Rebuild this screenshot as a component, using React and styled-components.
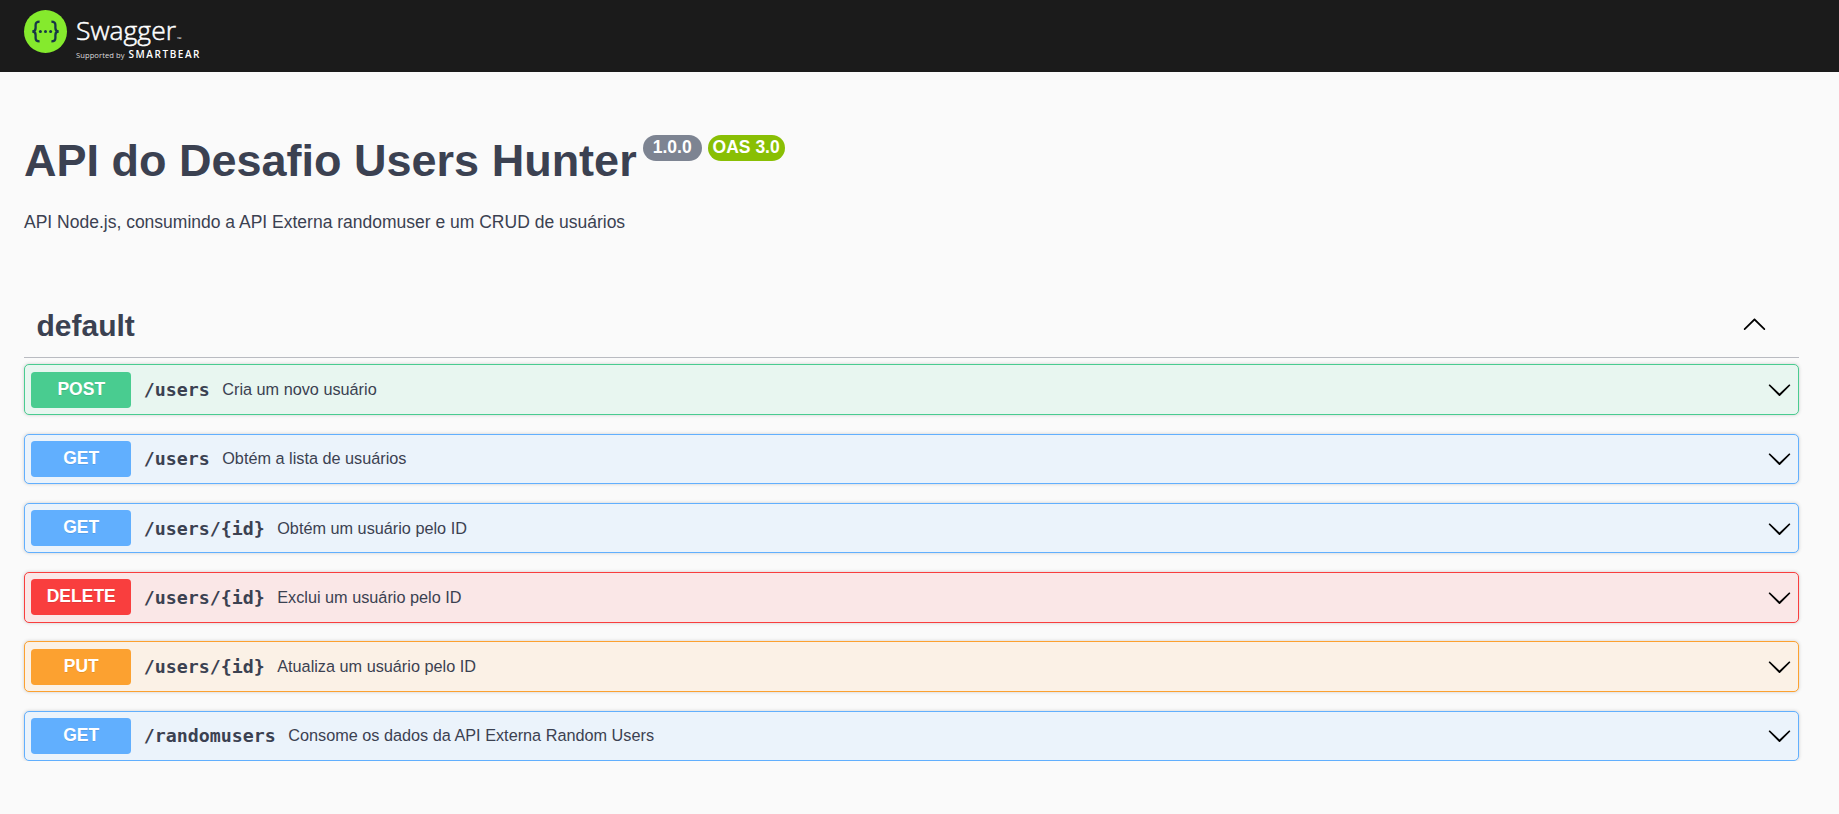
import React from 'react';
import styled, { createGlobalStyle } from 'styled-components';

const GlobalStyle = createGlobalStyle`
  *, *::before, *::after { box-sizing: border-box; }
  body {
    margin: 0;
    background: #fafafa;
    color: #3b4151;
    font-family: "Liberation Sans", Arial, sans-serif;
  }
`;

const Topbar = styled.header`
  height: 72px;
  padding: 9px 23px;
  background: #1b1b1b;
`;

const Logo = styled.svg`
  display: block;
  width: 180px;
  height: 54px;
`;

const Page = styled.main`
  width: 1775px;
  margin: 0 0 0 24px;
`;

const Info = styled.section`
  padding-top: 63px;
  height: 225px;
`;

const Title = styled.h1`
  display: flex;
  align-items: flex-start;
  margin: 0;
  font-size: 45px;
  line-height: 52px;
  font-weight: 700;
`;

const Badge = styled.span`
  margin: 0 0 0 6px;
  width: ${(p) => p.$width}px;
  height: 26px;
  border-radius: 26px;
  background: ${(p) => p.$color};
  color: #fff;
  font-size: 17.5px;
  line-height: 24px;
  text-align: center;
  white-space: nowrap;
`;

const Description = styled.p`
  margin: 23px 0 0;
  font-size: 17.5px;
  line-height: 24px;
`;

const SectionHeader = styled.div`
  display: flex;
  align-items: center;
  justify-content: space-between;
  height: 61px;
  margin-bottom: 6.35px;
  padding: 0 32px 7px 12.5px;
  border-bottom: 1px solid rgba(59, 65, 81, 0.34);
`;

const SectionName = styled.h3`
  margin: 0;
  padding-top: 4px;
  font-size: 30px;
  line-height: 36px;
`;

const OperationList = styled.div`
  display: flex;
  flex-direction: column;
  gap: 18.75px;
`;

const Operation = styled.div`
  display: flex;
  align-items: center;
  height: 50.52px;
  padding: 6.25px;
  border: 1px solid ${(p) => p.$color};
  border-radius: 5px;
  background: ${(p) => p.$tint};
  box-shadow: 0 0 3.75px rgba(0, 0, 0, 0.19);
`;

const Method = styled.span`
  width: 100px;
  height: 36px;
  border-radius: 3.75px;
  background: ${(p) => p.$color};
  color: #fff;
  font-size: 17.5px;
  font-weight: 700;
  line-height: 34px;
  text-align: center;
  text-shadow: 0 1px 0 rgba(0, 0, 0, 0.1);
`;

const Path = styled.span`
  padding: 1px 12.5px 0;
  font-family: "DejaVu Sans Mono", monospace;
  font-size: 18.27px;
  font-weight: 700;
  line-height: 24px;
`;

const Summary = styled.span`
  flex: 1;
  font-size: 16.25px;
`;

const Arrow = styled.svg`
  width: 25px;
  height: 25px;
  flex: none;
`;

const ArrowDown = () => (
  <Arrow viewBox="0 0 20 20">
    <path d="M17.418 6.109c.272-.268.709-.268.979 0s.271.701 0 .969l-7.908 7.83c-.27.268-.707.268-.979 0l-7.908-7.83c-.27-.268-.27-.701 0-.969.271-.268.709-.268.979 0L10 13.25l7.418-7.141z" />
  </Arrow>
);

const ArrowUp = () => (
  <Arrow viewBox="0 0 20 20">
    <path d="M17.418 14.908c.272.268.709.268.979 0s.271-.701 0-.969l-7.908-7.83c-.27-.268-.707-.268-.979 0l-7.908 7.83c-.27.268-.27.701 0 .969.271.268.709.268.979 0L10 7.767l7.418 7.141z" />
  </Arrow>
);

const SwaggerLogo = () => (
  <Logo viewBox="23 9 180 54">
    <circle cx="45.5" cy="31.5" r="21.5" fill="#85ea2d" />
    <g fill="none" stroke="#173647" strokeWidth="2.3">
      <path d="M39.6 21.6c-3 0-4 .9-4 3.4v3c0 2.3-1 3.5-3.3 3.5 2.3 0 3.3 1.2 3.3 3.5v3c0 2.5 1 3.4 4 3.4" />
      <path d="M51.4 21.6c3 0 4 .9 4 3.4v3c0 2.3 1 3.5 3.3 3.5-2.3 0-3.3 1.2-3.3 3.5v3c0 2.5-1 3.4-4 3.4" />
    </g>
    <g fill="#173647">
      <circle cx="40.4" cy="31.5" r="1.5" />
      <circle cx="45.5" cy="31.5" r="1.5" />
      <circle cx="50.6" cy="31.5" r="1.5" />
    </g>
    <g fill="#fff">
      <text x="76" y="40.3" fontFamily="Open Sans, Noto Sans, sans-serif" fontSize="26.5" fontWeight="300" stroke="#fff" strokeWidth="0.5" textLength="100" lengthAdjust="spacingAndGlyphs">Swagger</text>
      <text x="177" y="41" fontFamily="Open Sans, sans-serif" fontSize="5" textLength="4.5" lengthAdjust="spacingAndGlyphs">™</text>
      <text x="76" y="57.6" fontFamily="Open Sans, Noto Sans, sans-serif" fontSize="7.6" fill="#ddd" textLength="48.5">Supported by</text>
      <text x="128.5" y="58" fontFamily="Open Sans, sans-serif" fontSize="10" fontWeight="600" textLength="71">SMARTBEAR</text>
    </g>
  </Logo>
);

const COLORS = {
  POST: ['#49cc90', '#e8f6f0'],
  GET: ['#61affe', '#ebf3fb'],
  DELETE: ['#f93e3e', '#fae7e7'],
  PUT: ['#fca130', '#fbf1e6'],
};

const OPERATIONS = [
  ['POST', '/users', 'Cria um novo usuário'],
  ['GET', '/users', 'Obtém a lista de usuários'],
  ['GET', '/users/{id}', 'Obtém um usuário pelo ID'],
  ['DELETE', '/users/{id}', 'Exclui um usuário pelo ID'],
  ['PUT', '/users/{id}', 'Atualiza um usuário pelo ID'],
  ['GET', '/randomusers', 'Consome os dados da API Externa Random Users'],
];

export default function App() {
  return (
    <>
      <GlobalStyle />
      <Topbar>
        <SwaggerLogo />
      </Topbar>
      <Page>
        <Info>
          <Title>
            API do Desafio Users Hunter
            <Badge $width={59} $color="#7d8492">1.0.0</Badge>
            <Badge $width={77} $color="#89bf04">OAS 3.0</Badge>
          </Title>
          <Description>API Node.js, consumindo a API Externa randomuser e um CRUD de usuários</Description>
        </Info>
        <SectionHeader>
          <SectionName>default</SectionName>
          <ArrowUp />
        </SectionHeader>
        <OperationList>
          {OPERATIONS.map(([method, path, summary]) => {
            const [color, tint] = COLORS[method];
            return (
              <Operation key={method + path} $color={color} $tint={tint}>
                <Method $color={color}>{method}</Method>
                <Path>{path}</Path>
                <Summary>{summary}</Summary>
                <ArrowDown />
              </Operation>
            );
          })}
        </OperationList>
      </Page>
    </>
  );
}
